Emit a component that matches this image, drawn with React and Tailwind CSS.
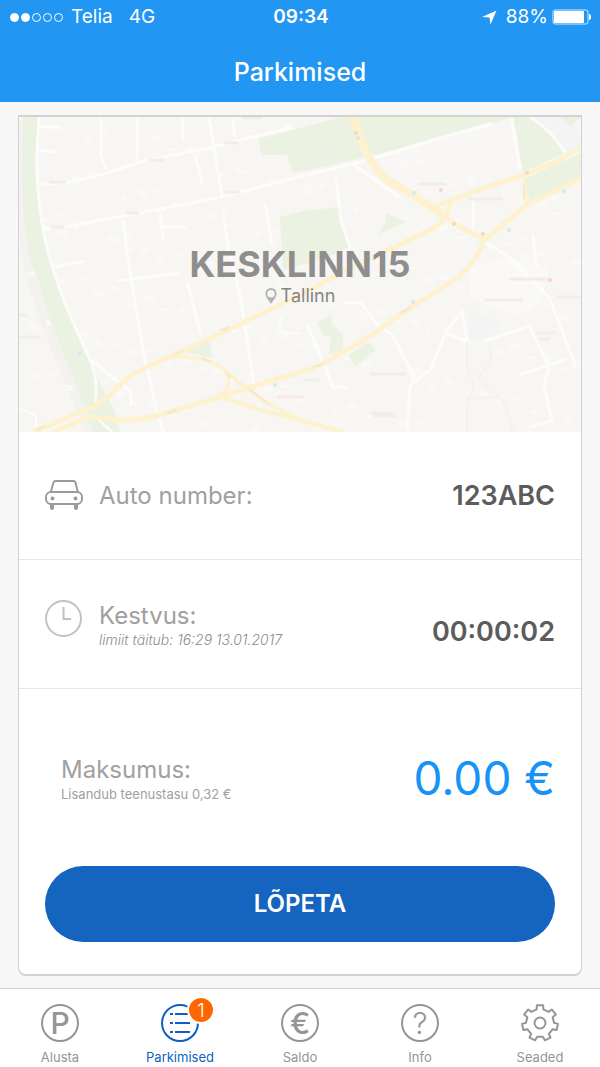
import { useState } from 'react';

const tabs = [
  { id: 'start', label: 'Alusta' },
  { id: 'parkings', label: 'Parkimised', badge: 1 },
  { id: 'balance', label: 'Saldo' },
  { id: 'info', label: 'Info' },
  { id: 'settings', label: 'Seaded' }
];

// Pale building blocks scattered over the map
const buildings = Array.from({ length: 260 }, (_, i) => ({
  x: (i * 137) % 562,
  y: (i * 89 + Math.floor(i / 7) * 13) % 315,
  w: 4 + ((i * 5) % 7),
  h: 3 + ((i * 3) % 6)
}));

// Seven-toothed gear outline
const gearPoints = Array.from({ length: 7 }, (_, i) => {
  const mid = (i * 360) / 7 - 90;
  return [[-14, 14], [-10, 18], [10, 18], [14, 14]].map(([offset, radius]) => {
    const angle = ((mid + offset) * Math.PI) / 180;
    return `${(19 + radius * Math.cos(angle)).toFixed(1)},${(19 + radius * Math.sin(angle)).toFixed(1)}`;
  }).join(' ');
}).join(' ');

const StatusBar = () => (
  <div className="grid h-[34px] grid-cols-[1fr_auto_1fr] items-center pr-2 pl-[10px] text-[19px] leading-6">
    <div className="flex items-center">
      <div className="flex gap-[2px]">
        {[1, 1, 0, 0, 0].map((filled, i) => (
          <span
            key={i}
            className={`h-[9px] w-[9px] rounded-full border border-white ${filled ? 'bg-white' : ''}`}
          />
        ))}
      </div>
      <span className="ml-2">Telia</span>
      <span className="ml-4">4G</span>
    </div>
    <span className="font-semibold">09:34</span>
    <div className="flex items-center justify-end">
      <svg width="15" height="15" viewBox="0 0 15 15" fill="currentColor" className="mr-[9px]">
        <path d="M14.5 0.5 L8.5 14.5 L7.5 7.5 L0 7 Z" />
      </svg>
      <span>88%</span>
      <svg width="40" height="16" viewBox="0 0 40 16" className="ml-1">
        <rect x="1" y="1" width="35" height="14" rx="2" fill="none" stroke="#d3eafd" />
        <rect x="2" y="2" width="30" height="12" rx="1" fill="#fff" />
        <path d="M37 5 a2 3 0 0 1 0 6 Z" fill="#fff" />
      </svg>
    </div>
  </div>
);

const CityMap = () => (
  <svg
    viewBox="0 0 562 315"
    preserveAspectRatio="xMidYMid slice"
    className="absolute inset-0 h-full w-full"
    aria-hidden="true"
  >
    <rect width="562" height="315" fill="#f7f6f3" />
    <path d="M0 0 H4 L3 66 L14 153 L31 203 L74 315 H66 L28 222 L8 165 L0 120 Z" fill="#f3f2f0" />

    <g fill="#faf9f7">
      {buildings.map((b, i) => (
        <rect key={i} x={b.x} y={b.y} width={b.w} height={b.h} rx="1" />
      ))}
      <path d="M452 150 L486 140 L530 150 L522 186 L498 200 L450 180 Z" />
      <path d="M354 38 L470 8 L493 8 L500 52 L408 80 L372 58 Z" fillOpacity="0.6" />
    </g>
    <path d="M449 190 L482 207 L468 223 H450 Z M511 0 H541 L562 14 V30 L547 36 Z" fill="#f4f4f5" />

    {/* Parks */}
    <g fill="#ebf2e1">
      <path d="M4 0 Q1 70 6 110 Q9 140 16 155 L31 203 L56 266 L66 292 L74 315 H101 L94 290 L79 263 L71 243 L53 203 L36 160 L23 106 Q14 66 17 33 L20 0 Z" />
      <path d="M239 22 L281 11 L323 0 H494 L468 8 L414 23 L356 38 L281 55 L273 55 L268 38 L243 38 Z" />
      <path d="M261 100 L285 94 L319 90 L324 113 L330 130 L301 143 L264 153 Z" />
      <path d="M368 96 L386 105 L359 118 L366 106 Z" />
      <path d="M494 0 H511 Q530 12 546 36 L504 55 L499 26 Z M541 0 H562 L552 10 Z" />
      <path d="M504 63 L562 36 V58 L511 85 Z" />
      <path d="M164 235 L189 221 L194 241 Z" />
      <path d="M298 205 L313 198 L313 208 L324 216 V233 L310 238 L312 220 L304 218 Z" />
      <path d="M329 238 L349 225 L357 233 L336 250 Z" />
    </g>

    {/* Side streets */}
    <g fill="none" stroke="#fefefd" strokeWidth="3" strokeOpacity="0.8" strokeLinejoin="round">
      <path d="M20 0 Q15 60 23 106 Q30 150 53 203 L71 243 Q80 265 76 285 M20 9 L42 11 M20 33 L38 35" />
      <path d="M22 68 L50 65 L85 57 L121 45 L194 30 L275 10" />
      <path d="M23 112 L50 109 L110 98 L203 80 L267 63 L346 44 L414 23 L474 6" />
      <path d="M82 0 V38 L87 52 M118 0 V42 M164 0 V24 M190 0 L203 80 M176 37 L183 66 M213 0 L216 20" />
      <path d="M104 104 L111 155 L126 243 L139 298 L144 315 M141 95 L144 123 M141 110 H168 M204 96 L209 130 L222 183 L235 268" />
      <path d="M35 150 L66 144 M97 164 L162 156 M168 165 L182 216 M72 243 L97 263 L112 275 V288 M80 303 L93 315" />
      <path d="M246 86 L253 127 M317 60 L322 105 L331 130 M334 47 L380 80 M493 2 L501 52 M511 0 Q533 14 546 36" />
      <path d="M454 82 V118 M514 118 L518 150 M464 124 L490 140 L530 180 L557 250" />
      <path d="M328 186 H342 L358 207 L374 219 L395 260 L391 270 L388 315 M395 265 L412 252 L427 215 L443 194 L448 224 L428 217" />
      <path d="M466 224 L510 209 L530 250 L525 268 L533 304 L510 310 M500 258 L548 242 M289 209 L304 245 L314 270 H329" />
      <path d="M262 200 Q257 216 270 216 H281 M0 292 L17 298 V315" strokeWidth="2" />
    </g>
    <g fill="none" stroke="#f3f2ef" strokeWidth="2">
      <path d="M448 224 V250 L455 266 L448 292 V315 M471 224 L472 245 L458 262 L485 285 L494 315 M448 282 L480 280" />
    </g>

    {/* Main roads */}
    <g fill="none" stroke="#fdf1ce" strokeWidth="4" strokeLinejoin="round">
      <path d="M333 -2 L341 20 Q350 46 368 63 L394 78 L428 101" strokeWidth="8" />
      <path d="M428 101 L446 113 L464 121" strokeWidth="5" />
      <path d="M414 90 L454 75 L504 58 L534 46 L562 31" strokeWidth="5" />
      <path d="M562 61 L508 88 L464 124 Q460 142 438 161 L391 191 L348 221 L314 241 Q298 251 281 255 L228 271 L201 280 L148 296 Q120 304 100 303 L71 300 L34 315" strokeWidth="5" />
      <path d="M433 83 L426 101 Q418 112 394 121 L331 151 L281 178 L194 220 L148 241 Q118 253 104 265 Q90 280 78 288 L14 315" strokeWidth="5" />
      <path d="M151 240 Q180 238 196 247 Q208 254 222 267 L248 286 L281 303 L324 315 M209 260 Q212 273 199 279 L248 295 L281 303" />
      <path d="M505 58 L508 86" strokeWidth="3" />
    </g>
    <g fill="none" stroke="#f6e7cb" strokeWidth="2">
      <path d="M156 237 L164 234 M201 214 L210 210 M183 241 L192 245 M206 256 L212 261 M381 196 L392 190 M294 250 L305 247 M505 68 V82 M230 272 L248 286 M18 313 L26 309 M148 296 L158 293" />
    </g>

    {/* Stops and place labels */}
    <g fill="#d0eaf2">
      <circle cx="339" cy="21" r="2" />
      <circle cx="395" cy="76" r="2" />
      <circle cx="490" cy="113" r="2" />
      <circle cx="545" cy="74" r="2" />
      <circle cx="61" cy="236" r="2" />
      <circle cx="256" cy="268" r="2" />
      <circle cx="394" cy="185" r="2" />
    </g>
    <g fill="#f8d5c6">
      <circle cx="337" cy="16" r="2" />
      <circle cx="422" cy="73" r="2" />
      <circle cx="435" cy="107" r="2" />
      <circle cx="464" cy="117" r="2" />
      <circle cx="508" cy="56" r="2" />
      <circle cx="531" cy="163" r="2" />
    </g>
    <g fill="none" stroke="#efeeec" strokeWidth="3">
      <path d="M30 65 H47 M32 110 H45 M107 96 H120 M130 43 H145 M205 26 H219 M206 75 H220 M223 1 H243 M448 82 H484 M465 183 H504 M537 180 H562 M518 216 H536 M521 222 H531 M351 257 H387 M352 296 H374 M355 299 H378 M284 263 H300 M0 198 H8 M0 220 H21 M295 38 H309" />
      <path d="M399 67 H427 M490 162 H528 M258 280 H285" stroke="#f5eae8" />
    </g>
  </svg>
);

const CarIcon = () => (
  <svg width="38" height="31" viewBox="0 0 38 31" fill="none" stroke="#9b9b9b" strokeWidth="2">
    <path d="M5.5 13 L8.5 2.5 Q9 1 10.5 1 H28.5 Q30 1 30.5 2.5 L33 13" />
    <rect x="1" y="12" width="36" height="12" rx="5" />
    <path d="M7 25 V28 M31 25 V28" strokeWidth="4" strokeLinecap="round" />
    <circle cx="7.5" cy="18.5" r="2" fill="#9b9b9b" stroke="none" />
    <circle cx="30.5" cy="18.5" r="2" fill="#9b9b9b" stroke="none" />
  </svg>
);

const ClockIcon = () => (
  <svg width="38" height="38" viewBox="0 0 38 38" fill="none" stroke="#c2c2c2" strokeWidth="2">
    <circle cx="18.5" cy="18.5" r="17.5" />
    <path d="M18.5 7 V19 H26" />
  </svg>
);

const PinIcon = () => (
  <svg width="12" height="16" viewBox="0 0 12 16">
    <path
      d="M6 0 A5.5 5.5 0 0 0 0.5 5.5 C0.5 9 3 11 6 16 C9 11 11.5 9 11.5 5.5 A5.5 5.5 0 0 0 6 0 Z M6 2 A3.8 3.8 0 1 1 6 9.600 A3.8 3.8 0 0 1 6 2 Z"
      fill="#b0b0b0"
      fillRule="evenodd"
    />
  </svg>
);

const TabIcon = ({ id }) => {
  if (id === 'settings') {
    return (
      <svg width="38" height="38" viewBox="0 0 38 38" fill="none" stroke="currentColor" strokeWidth="2">
        <polygon points={gearPoints} strokeLinejoin="round" />
        <circle cx="19" cy="19" r="5.5" />
      </svg>
    );
  }

  return (
    <span className="flex h-[38px] w-[38px] items-center justify-center rounded-full border-2 border-current leading-none">
      {id === 'start' && <span className="text-[30px] font-medium">P</span>}
      {id === 'balance' && <span className="text-[30px] font-medium">€</span>}
      {id === 'info' && <span className="text-[30px] font-light">?</span>}
      {id === 'parkings' && (
        <svg width="22" height="22" viewBox="0 0 22 22" stroke="currentColor" strokeWidth="2">
          <path d="M1 2 H4 M6 2 H21 M1 11 H4 M6 11 H21 M1 20 H4 M6 20 H21" />
        </svg>
      )}
    </span>
  );
};

const Row = ({ icon, label, note, value }) => (
  <div className="flex min-h-32 items-center border-b border-[#e6e6e6] px-[26px] py-10">
    <div className={`flex w-full justify-between ${note ? 'items-end' : 'items-center'}`}>
      <div className={`flex gap-4 ${note ? 'items-start' : 'items-center'}`}>
        {icon}
        <div>
          <div className="text-2xl leading-8 text-[#a0a0a0]">{label}</div>
          {note && <div className="text-sm leading-4 font-light text-[#8c8c8c] italic">{note}</div>}
        </div>
      </div>
      <div className="text-[27px] leading-8 font-semibold text-[#5c5c5c]">{value}</div>
    </div>
  </div>
);

export default function App() {
  const [activeTab, setActiveTab] = useState('parkings');

  return (
    <div className="flex min-h-screen flex-col bg-[#f7f7f7] font-['Inter',sans-serif]">
      <header className="bg-[#2196f3] text-white">
        <StatusBar />
        <h1 className="pt-[22px] pb-[14px] text-center text-[25px] leading-8 font-medium">Parkimised</h1>
      </header>

      <main className="flex flex-1 flex-col px-[18px] pt-[13px] pb-3">
        <section className="flex-1 overflow-hidden rounded-b-lg border border-y-2 border-[#d2d2d2] bg-white">
          <div className="relative flex h-[315px] flex-col items-center justify-center pt-[2px]">
            <CityMap />
            <h2 className="relative text-4xl font-bold text-[#8e8e8e]">KESKLINN15</h2>
            <p className="relative flex items-center gap-1 text-lg leading-6 text-[#858585]">
              <PinIcon />
              Tallinn
            </p>
          </div>

          <Row icon={<CarIcon />} label="Auto number:" value="123ABC" />
          <Row
            icon={<ClockIcon />}
            label="Kestvus:"
            note="limiit täitub: 16:29 13.01.2017"
            value="00:00:02"
          />

          <div className="px-[26px] pt-[65px] pb-8">
            <div className="flex items-center justify-between pl-4">
              <div>
                <div className="text-2xl leading-8 text-[#a0a0a0]">Maksumus:</div>
                <div className="text-[13px] leading-4 text-[#a0a0a0]">Lisandub teenustasu 0,32 €</div>
              </div>
              <div className="text-[46px] leading-[48px] text-[#1593f6]">0.00 €</div>
            </div>
            <button
              type="button"
              className="mt-16 h-[76px] w-full rounded-full bg-[#1565c0] text-2xl font-semibold text-white"
            >
              LÕPETA
            </button>
          </div>
        </section>
      </main>

      <nav className="grid grid-cols-5 border-t border-[#cfcfcf] bg-white pt-[15px] pb-[2px]">
        {tabs.map((tab) => (
          <button
            key={tab.id}
            type="button"
            onClick={() => setActiveTab(tab.id)}
            className={`flex flex-col items-center gap-[7px] ${activeTab === tab.id ? 'text-[#0f5fc2]' : 'text-[#959595]'}`}
          >
            <span className="relative">
              <TabIcon id={tab.id} />
              {tab.badge && (
                <span className="absolute -top-2 -right-4 flex h-7 w-7 items-center justify-center rounded-full border-2 border-white bg-[#ff6600] text-[19px] leading-none font-light text-white">
                  {tab.badge}
                </span>
              )}
            </span>
            <span className="text-[13px] leading-4">{tab.label}</span>
          </button>
        ))}
      </nav>
    </div>
  );
}
